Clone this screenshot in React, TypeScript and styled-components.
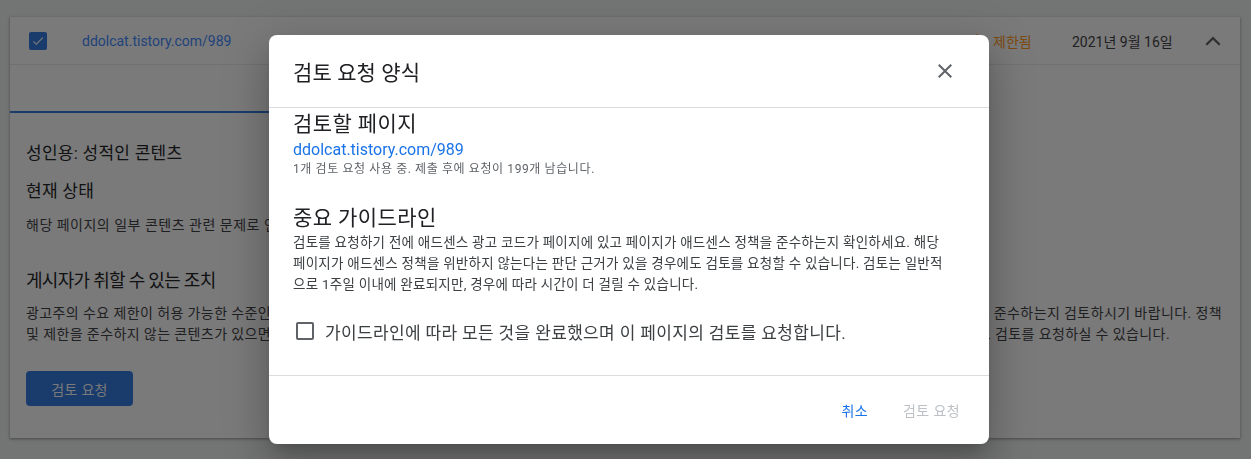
import React from 'react';
import styled, { createGlobalStyle } from 'styled-components';

const FONT = `Roboto, "Noto Sans CJK KR", "Noto Sans", sans-serif`;

const colors = {
  text: '#202124',
  subText: '#3c4043',
  lightText: '#5f6368',
  blue: '#1a73e8',
  border: '#dadce0',
  disabled: '#bdc1c6',
};

// the page sits under a 52% black scrim, so its palette is drawn already dimmed
const dim = {
  page: '#737474',
  card: '#7a7a7a',
  text: '#101112',
  subText: '#1e2022',
  lightText: '#2e3032',
  blue: '#1a3c6c',
  link: '#1e427a',
  orange: '#7d4a10',
  border: '#707173',
};

const GlobalStyle = createGlobalStyle`
  html, body {
    margin: 0;
    background-color: ${dim.page};
    font-family: ${FONT};
    color: ${dim.text};
  }
  * { box-sizing: border-box; }
`;

/* ---------- page behind the dialog ---------- */

const Page = styled.div`
  min-height: 459px;
  padding: 17px 11px 0 10px;
  background-color: ${dim.page};
`;

const Card = styled.section`
  background-color: ${dim.card};
  color: ${dim.text};
  box-shadow: 0 1px 2px rgba(0, 0, 0, 0.25), 0 1px 3px 1px rgba(0, 0, 0, 0.1);
`;

const SummaryRow = styled.div`
  display: flex;
  align-items: center;
  height: 48px;
  padding: 0 15px 0 19px;
  border-bottom: 1px solid ${dim.border};
  font-size: 14px;
`;

const CheckBox = styled.span<{ $checked: boolean; $fill?: string }>`
  flex: none;
  width: 18px;
  height: 18px;
  border-radius: 2px;
  display: inline-flex;
  align-items: center;
  justify-content: center;
  background: ${({ $checked, $fill }) => ($checked ? $fill ?? colors.blue : 'transparent')};
  border: ${({ $checked }) => ($checked ? 'none' : `2px solid ${colors.lightText}`)};
`;

const UrlCell = styled.a`
  flex: 1;
  margin-left: 35px;
  color: ${dim.link};
  text-decoration: none;
`;

const IssueCell = styled.div`
  width: 230px;
  color: ${dim.subText};
`;

const StatusCell = styled.div`
  width: 104px;
  display: flex;
  align-items: center;
  gap: 7px;
  color: ${dim.orange};
`;

const DateCell = styled.div`
  width: 129px;
  color: ${dim.subText};
`;

const IconBox = styled.span`
  display: inline-flex;
  width: 24px;
  height: 24px;
  color: ${dim.lightText};
`;

const Tabs = styled.div`
  display: flex;
  height: 48px;
`;

const Tab = styled.div<{ $active: boolean }>`
  width: 820px;
  display: flex;
  align-items: center;
  justify-content: center;
  font-size: 14px;
  color: ${({ $active }) => ($active ? dim.blue : dim.lightText)};
  border-bottom: 2px solid ${({ $active }) => ($active ? dim.blue : 'transparent')};
`;

const Details = styled.div`
  padding: 28px 18px 32px 16px;
`;

const IssueTitle = styled.h3`
  margin: 0;
  font-size: 17px;
  line-height: 24px;
  font-weight: 400;
  letter-spacing: 0.25px;
`;

const SectionTitle = styled.h4`
  margin: 14px 0 0;
  font-size: 17px;
  line-height: 24px;
  font-weight: 400;
  letter-spacing: 0.25px;
`;

const StatusText = styled.p`
  margin: 12px 0 0;
  font-size: 14px;
  line-height: 20px;
  letter-spacing: 0.5px;
  color: ${dim.subText};
`;

const ActionTitle = styled.h4`
  margin: 33px 0 0;
  font-size: 18px;
  line-height: 26px;
  font-weight: 400;
  letter-spacing: -0.7px;
`;

const ActionText = styled.div`
  margin-top: 9px;
`;

const SplitLine = styled.div<{ $endInset?: number }>`
  display: flex;
  justify-content: space-between;
  white-space: nowrap;
  font-size: 14px;
  line-height: 21px;
  letter-spacing: 0.4px;
  color: ${dim.subText};
  padding-right: ${({ $endInset }) => $endInset ?? 0}px;
`;

const PrimaryButton = styled.button`
  margin-top: 26px;
  width: 107px;
  height: 35px;
  border: none;
  border-radius: 4px;
  background-color: ${dim.blue};
  color: ${dim.card};
  font-family: ${FONT};
  font-size: 14px;
  letter-spacing: 0.3px;
`;

/* ---------- modal ---------- */

const Backdrop = styled.div`
  position: fixed;
  top: 0;
  left: 0;
  width: 100%;
  height: 100%;
  z-index: 10;
  padding: 35px 0 0 269px;
`;

const Dialog = styled.div`
  width: 720px;
  background: #fff;
  border-radius: 8px;
  box-shadow: 0 11px 15px -7px rgba(0, 0, 0, 0.2), 0 24px 38px 3px rgba(0, 0, 0, 0.14),
    0 9px 46px 8px rgba(0, 0, 0, 0.12);
`;

const DialogHeader = styled.div`
  box-sizing: content-box;
  height: 72px;
  display: flex;
  align-items: center;
  justify-content: space-between;
  padding: 0 24px;
  border-bottom: 1px solid ${colors.border};
`;

const DialogTitle = styled.h2`
  margin: 0;
  font-size: 21px;
  font-weight: 400;
  letter-spacing: 0.1px;
  color: ${colors.text};
`;

const CloseButton = styled.button`
  display: inline-flex;
  padding: 8px;
  border: none;
  background: none;
  color: ${colors.lightText};
`;

const DialogBody = styled.div`
  padding: 2px 24px 32px;
`;

const BodyHeading = styled.h3<{ $gap?: number }>`
  margin: ${({ $gap }) => $gap ?? 0}px 0 0;
  font-size: 21px;
  line-height: 28px;
  font-weight: 400;
  letter-spacing: 0.4px;
  color: ${colors.text};
`;

const PageLink = styled.a`
  display: block;
  margin-top: 1px;
  font-size: 16px;
  line-height: 22px;
  color: ${colors.blue};
  text-decoration: none;
`;

const Quota = styled.div`
  font-size: 12px;
  line-height: 16px;
  letter-spacing: 0.6px;
  color: ${colors.lightText};
`;

const Guide = styled.p`
  margin: 0;
  font-size: 13.5px;
  line-height: 21px;
  letter-spacing: 0.25px;
  white-space: nowrap;
  color: ${colors.subText};
`;

const ConfirmRow = styled.label`
  display: flex;
  align-items: center;
  gap: 11px;
  height: 24px;
  margin-top: 24px;
  padding-left: 3px;
  font-size: 17px;
  letter-spacing: 0.35px;
  color: ${colors.subText};
`;

const DialogFooter = styled.div`
  height: 69px;
  display: flex;
  align-items: center;
  justify-content: flex-end;
  gap: 9px;
  padding-right: 16px;
  border-top: 1px solid ${colors.border};
`;

const TextButton = styled.button<{ $disabled?: boolean }>`
  border: none;
  background: none;
  padding: 8px 13px;
  font-family: ${FONT};
  font-size: 14px;
  letter-spacing: 0.4px;
  color: ${({ $disabled }) => ($disabled ? colors.disabled : colors.blue)};
`;

const CheckMark = () => (
  <svg width="14" height="14" viewBox="0 0 24 24">
    <path d="M9 16.2 4.8 12l-1.4 1.4L9 19 21 7l-1.4-1.4z" fill={dim.card} />
  </svg>
);

const WarningIcon = () => (
  <svg width="18" height="18" viewBox="0 0 24 24">
    <path d="M1 21h22L12 2 1 21zm12-3h-2v-2h2v2zm0-4h-2v-4h2v4z" fill={dim.orange} />
  </svg>
);

const App: React.FC = () => (
  <>
    <GlobalStyle />
    <Page>
      <Card>
        <SummaryRow>
          <CheckBox $checked $fill={dim.blue}>
            <CheckMark />
          </CheckBox>
          <UrlCell>ddolcat.tistory.com/989</UrlCell>
          <IssueCell>성인용: 성적인 콘텐츠</IssueCell>
          <StatusCell>
            <WarningIcon />
            제한됨
          </StatusCell>
          <DateCell>2021년 9월 16일</DateCell>
          <IconBox>
            <svg width="24" height="24" viewBox="0 0 24 24">
              <path
                d="M12 7.5 4.5 15l1.6 1.6 5.9-5.9 5.9 5.9 1.6-1.6z"
                fill="currentColor"
              />
            </svg>
          </IconBox>
        </SummaryRow>
        <Tabs>
          <Tab $active>문제 세부정보</Tab>
        </Tabs>
        <Details>
          <IssueTitle>성인용: 성적인 콘텐츠</IssueTitle>
          <SectionTitle>현재 상태</SectionTitle>
          <StatusText>해당 페이지의 일부 콘텐츠 관련 문제로 인해 광고 게재가 제한되었습니다.</StatusText>
          <ActionTitle>게시자가 취할 수 있는 조치</ActionTitle>
          <ActionText>
            <SplitLine>
              <span>광고주의 수요 제한이 허용 가능한 수준인</span>
              <span>을 준수하는지 검토하시기 바랍니다. 정책</span>
            </SplitLine>
            <SplitLine $endInset={52}>
              <span>및 제한을 준수하지 않는 콘텐츠가 있으면</span>
              <span>도 검토를 요청하실 수 있습니다.</span>
            </SplitLine>
          </ActionText>
          <PrimaryButton>검토 요청</PrimaryButton>
        </Details>
      </Card>
    </Page>

    <Backdrop>
      <Dialog role="dialog">
        <DialogHeader>
          <DialogTitle>검토 요청 양식</DialogTitle>
          <CloseButton aria-label="닫기">
            <svg width="24" height="24" viewBox="0 0 24 24">
              <path
                d="M19 6.41 17.59 5 12 10.59 6.41 5 5 6.41 10.59 12 5 17.59 6.41 19 12 13.41 17.59 19 19 17.59 13.41 12z"
                fill="currentColor"
              />
            </svg>
          </CloseButton>
        </DialogHeader>
        <DialogBody>
          <BodyHeading>검토할 페이지</BodyHeading>
          <PageLink>ddolcat.tistory.com/989</PageLink>
          <Quota>1개 검토 요청 사용 중. 제출 후에 요청이 199개 남습니다.</Quota>
          <BodyHeading $gap={27}>중요 가이드라인</BodyHeading>
          <Guide>
            검토를 요청하기 전에 애드센스 광고 코드가 페이지에 있고 페이지가 애드센스 정책을 준수하는지 확인하세요. 해당
            <br />
            페이지가 애드센스 정책을 위반하지 않는다는 판단 근거가 있을 경우에도 검토를 요청할 수 있습니다. 검토는 일반적
            <br />
            으로 1주일 이내에 완료되지만, 경우에 따라 시간이 더 걸릴 수 있습니다.
          </Guide>
          <ConfirmRow>
            <CheckBox $checked={false} />
            가이드라인에 따라 모든 것을 완료했으며 이 페이지의 검토를 요청합니다.
          </ConfirmRow>
        </DialogBody>
        <DialogFooter>
          <TextButton>취소</TextButton>
          <TextButton $disabled>검토 요청</TextButton>
        </DialogFooter>
      </Dialog>
    </Backdrop>
  </>
);

export default App;
